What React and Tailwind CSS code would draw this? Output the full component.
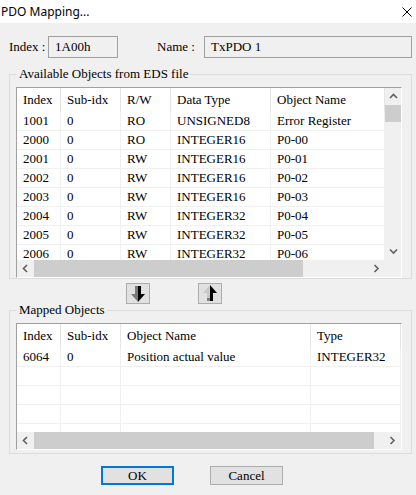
import React from 'react';

const availableCols = [
  { key: 'index', label: 'Index', w: 'w-[44px]' },
  { key: 'sub', label: 'Sub-idx', w: 'w-[60px]' },
  { key: 'rw', label: 'R/W', w: 'w-[50px]' },
  { key: 'type', label: 'Data Type', w: 'w-[100px]' },
  { key: 'name', label: 'Object Name', w: 'w-[114px]' },
];

const availableRows = [
  { index: '1001', sub: '0', rw: 'RO', type: 'UNSIGNED8', name: 'Error Register' },
  { index: '2000', sub: '0', rw: 'RO', type: 'INTEGER16', name: 'P0-00' },
  { index: '2001', sub: '0', rw: 'RW', type: 'INTEGER16', name: 'P0-01' },
  { index: '2002', sub: '0', rw: 'RW', type: 'INTEGER16', name: 'P0-02' },
  { index: '2003', sub: '0', rw: 'RW', type: 'INTEGER16', name: 'P0-03' },
  { index: '2004', sub: '0', rw: 'RW', type: 'INTEGER32', name: 'P0-04' },
  { index: '2005', sub: '0', rw: 'RW', type: 'INTEGER32', name: 'P0-05' },
  { index: '2006', sub: '0', rw: 'RW', type: 'INTEGER32', name: 'P0-06' },
];

const mappedCols = [
  { key: 'index', label: 'Index', w: 'w-[44px]' },
  { key: 'sub', label: 'Sub-idx', w: 'w-[60px]' },
  { key: 'name', label: 'Object Name', w: 'w-[190px]' },
  { key: 'type', label: 'Type', w: 'w-[90px]' },
];

const mappedRows = [
  { index: '6064', sub: '0', name: 'Position actual value', type: 'INTEGER32' },
  {}, {}, {}, {},
];

// little scrollbar chevrons
function Chevron({ dir }) {
  const pts = {
    up: '1,5 4.5,1.5 8,5',
    down: '1,1.5 4.5,5 8,1.5',
    left: '5,1 1.5,4.5 5,8',
    right: '1.5,1 5,4.5 1.5,8',
  }[dir];
  const vertical = dir === 'up' || dir === 'down';
  return (
    <svg width={vertical ? 9 : 7} height={vertical ? 7 : 9} viewBox={vertical ? '0 0 9 7' : '0 0 7 9'}>
      <polyline points={pts} fill="none" stroke="#606060" strokeWidth="1.6" />
    </svg>
  );
}

function ListView({ cols, rows, height, vScroll, thumbW, trackW }) {
  return (
    <div className={`flex flex-col w-[386px] ${height} bg-white border border-t-[#a0a0a0] border-l-[#a0a0a0] border-r-white border-b-white`}>
      <div className="flex flex-1 min-h-0">
        <div className="flex-1 overflow-hidden">
          <div className="flex h-[24px]">
            {cols.map((c) => (
              <div key={c.key} className={`${c.w} shrink-0 flex items-center pl-[6px] border-r border-[#e5e5e5]`}>
                {c.label}
              </div>
            ))}
          </div>
          {rows.map((r, i) => (
            <div key={i} className="flex h-[19px] border-b border-[#f0f0f0]">
              {cols.map((c) => (
                <div key={c.key} className={`${c.w} shrink-0 flex items-center pl-[6px] border-r border-[#f0f0f0] whitespace-nowrap`}>
                  {r[c.key] || ''}
                </div>
              ))}
            </div>
          ))}
        </div>
        {vScroll && (
          <div className="w-[16px] shrink-0 flex flex-col bg-[#f0f0f0]">
            <div className="h-[17px] flex items-center justify-center">
              <Chevron dir="up" />
            </div>
            <div className="h-[17px] bg-[#cdcdcd]" />
            <div className="flex-1" />
            <div className="h-[17px] flex items-center justify-center">
              <Chevron dir="down" />
            </div>
          </div>
        )}
      </div>
      <div className="flex h-[17px] shrink-0 bg-[#f0f0f0]">
        <div className="w-[17px] flex items-center justify-center">
          <Chevron dir="left" />
        </div>
        <div className={`${trackW} flex`}>
          <div className={`${thumbW} bg-[#cdcdcd]`} />
        </div>
        <div className="w-[17px] flex items-center justify-center">
          <Chevron dir="right" />
        </div>
        {vScroll && <div className="w-[16px]" />}
      </div>
    </div>
  );
}

function GroupBox({ title, height, children }) {
  return (
    <div className={`relative ml-[9px] w-[403px] ${height} border border-[#dcdcdc] pl-[6px] pt-[12px]`}>
      <span className="absolute left-[7px] top-[-9px] px-[2px] bg-[#f0f0f0] leading-[16px]">{title}</span>
      {children}
    </div>
  );
}

function ArrowButton({ up }) {
  return (
    <button className="w-[24px] h-[21px] bg-[#e1e1e1] border border-[#adadad] flex items-center justify-center p-0">
      <svg width="22" height="19" viewBox="1 1 22 19">
        {up ? (
          <>
            <polygon points="12,2 5,10 9,10 9,18 12,18" fill="#c8c8c8" />
            <polygon points="12,2 19,10 15,10 15,18 12,18" fill="#000" />
            <polygon points="9,15 12,15 12,18 9,18" fill="#808080" />
          </>
        ) : (
          <>
            <polygon points="9,3 12,3 12,19 5,11 9,11" fill="#7a7a7a" />
            <polygon points="12,3 15,3 15,11 19,11 12,19" fill="#000" />
          </>
        )}
      </svg>
    </button>
  );
}

export default function App() {
  return (
    <div className="w-[416px] h-[495px] overflow-hidden bg-[#f0f0f0] text-black text-[13px] font-['Liberation_Serif','Times_New_Roman',serif]">
      {/* title bar */}
      <div className="h-[23px] bg-white flex items-center justify-between pl-[1px] pr-[4px]">
        <span className="text-[12px] font-['Noto_Sans',sans-serif] leading-none">PDO Mapping...</span>
        <svg width="10" height="10" viewBox="0 0 10 10">
          <path d="M0.5 0.5 L9.5 9.5 M9.5 0.5 L0.5 9.5" stroke="#000" strokeWidth="1" />
        </svg>
      </div>

      {/* index / name */}
      <div className="flex items-center h-[22px] mt-[13px]">
        <span className="ml-[9px] w-[39px]">Index :</span>
        <div className="w-[70px] h-[22px] border border-[#a0a0a0] flex items-center pl-[6px]">1A00h</div>
        <span className="ml-[39px] w-[47px]">Name :</span>
        <div className="w-[208px] h-[22px] border border-[#a0a0a0] flex items-center pl-[6px]">TxPDO 1</div>
      </div>

      <div className="mt-[16px]">
        <GroupBox title="Available Objects from EDS file" height="h-[205px]">
          <ListView
            cols={availableCols}
            rows={availableRows}
            height="h-[191px]"
            vScroll
            trackW="w-[334px]"
            thumbW="w-[269px]"
          />
        </GroupBox>
      </div>

      <div className="flex h-[21px] mt-[4px]">
        <div className="ml-[126px]">
          <ArrowButton />
        </div>
        <div className="ml-[48px]">
          <ArrowButton up />
        </div>
      </div>

      <div className="mt-[6px]">
        <GroupBox title="Mapped Objects" height="h-[144px]">
          <ListView
            cols={mappedCols}
            rows={mappedRows}
            height="h-[127px]"
            trackW="w-[350px]"
            thumbW="w-[340px]"
          />
        </GroupBox>
      </div>

      <div className="flex mt-[12px]">
        <button className="ml-[101px] w-[73px] h-[19px] bg-[#e1e1e1] border-2 border-[#0078d7] flex items-center justify-center leading-none">
          OK
        </button>
        <button className="ml-[36px] w-[73px] h-[19px] bg-[#e1e1e1] border border-[#adadad] flex items-center justify-center leading-none">
          Cancel
        </button>
      </div>
    </div>
  );
}
